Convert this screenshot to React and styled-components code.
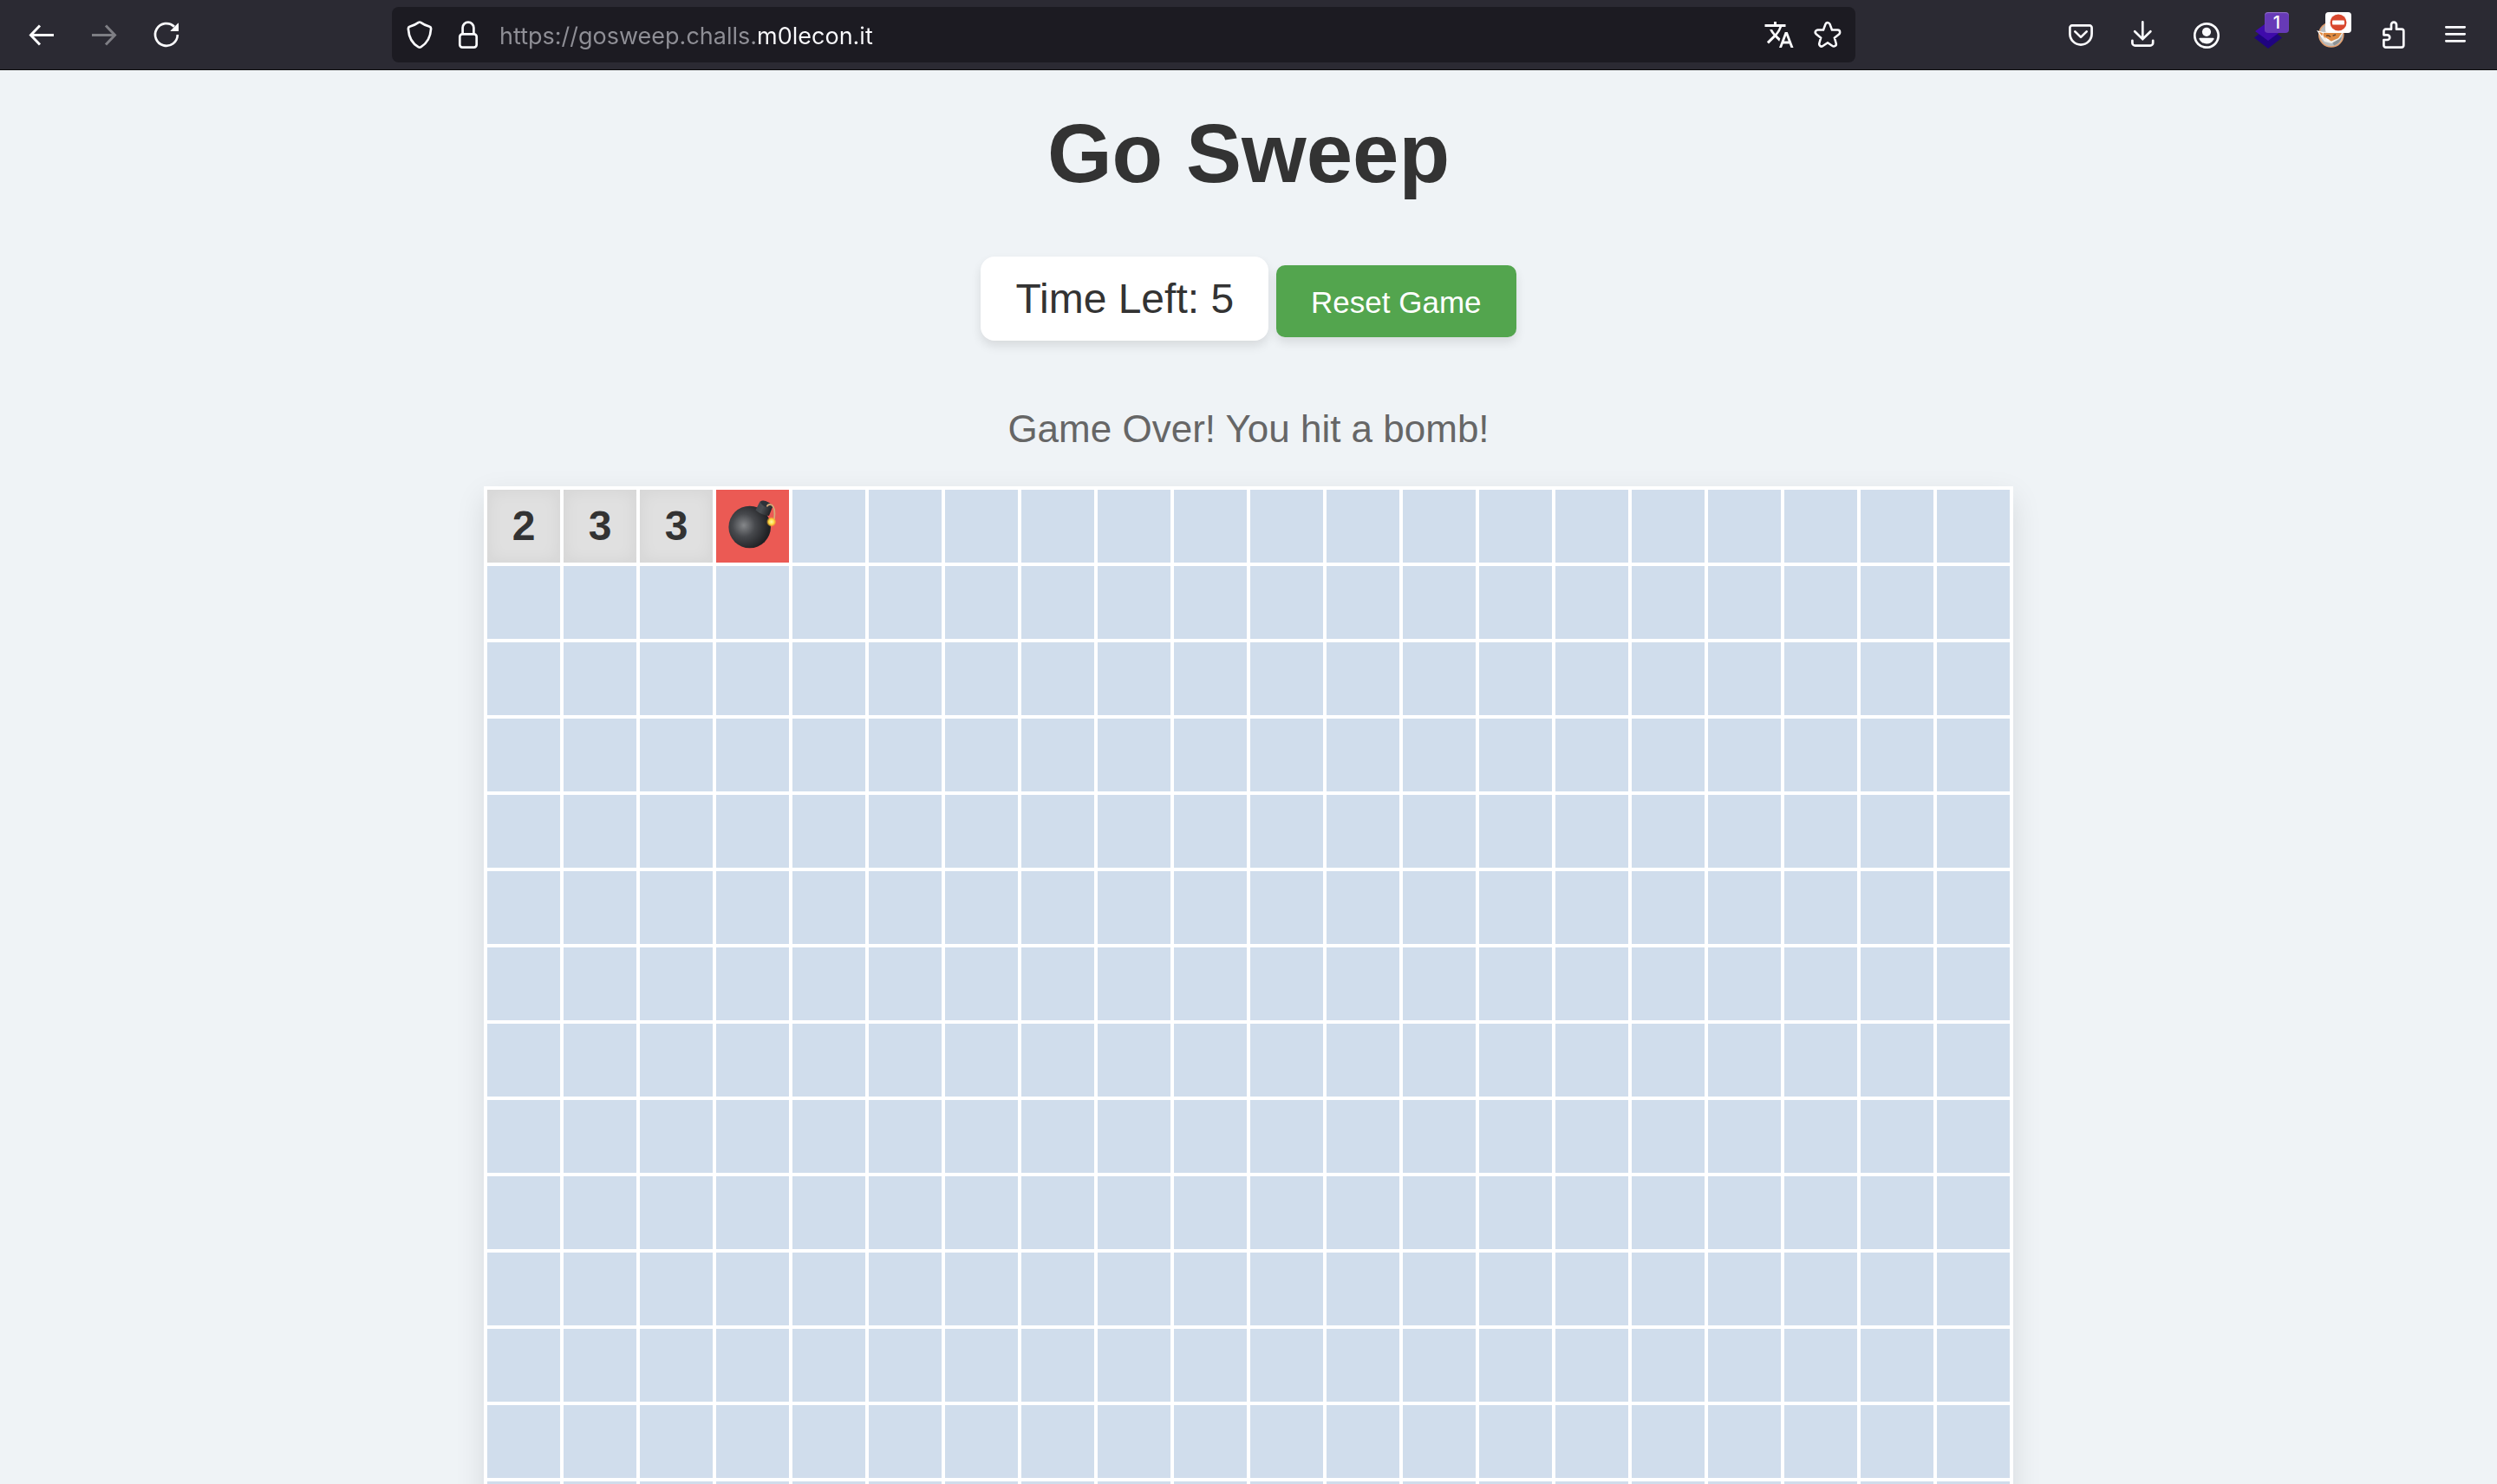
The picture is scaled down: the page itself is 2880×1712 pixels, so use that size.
import React, { useState } from "react";
import styled, { createGlobalStyle, css } from "styled-components";
import { MdTranslate } from "react-icons/md";

const GlobalStyle = createGlobalStyle`
  *, *::before, *::after { box-sizing: border-box; }
  body {
    margin: 0;
    background: #eff3f6;
    color: #333;
    font-family: Arial, "Liberation Sans", sans-serif;
  }
  button, input { font: inherit; color: inherit; }
`;

const Window = styled.div`
  display: flex;
  flex-direction: column;
  height: 100vh;
`;

const Toolbar = styled.header`
  display: flex;
  align-items: center;
  flex: none;
  padding: 0 12px;
  background: #2b2a33;
  border-bottom: 1px solid #0c0c0d;
  color: #fbfbfe;
`;

const ToolGroup = styled.nav`
  display: flex;
`;

const ToolButton = styled.button`
  position: relative;
  display: flex;
  align-items: center;
  justify-content: center;
  width: 72px;
  height: 80px;
  padding: 0;
  border: 0;
  background: none;
  opacity: ${(p) => (p.disabled ? 0.4 : 1)};
`;

const Badge = styled.span`
  position: absolute;
  top: 14px;
  left: ${(p) => (p.$light ? 30 : 32)}px;
  display: flex;
  align-items: center;
  justify-content: center;
  width: ${(p) => (p.$light ? 30 : 28)}px;
  height: 24px;
  border-radius: 4px;
  background: ${(p) => (p.$light ? "#fff" : "#673ab7")};
  box-shadow: inset 0 1px 1px rgba(255, 255, 255, 0.3);
  color: #fff;
  font: 500 20px/24px Inter, "Liberation Sans", sans-serif;
`;

const AddressBar = styled.div`
  display: flex;
  align-items: center;
  flex: 1;
  height: 64px;
  margin: 0 224px;
  padding: 0 4px;
  border-radius: 8px;
  background: #1c1b22;
`;

const BarButton = styled.button`
  display: flex;
  align-items: center;
  justify-content: center;
  flex: none;
  width: 56px;
  height: 64px;
  padding: 0;
  border: 0;
  background: none;
`;

const AddressInput = styled.input`
  flex: 1;
  min-width: 0;
  height: 42px;
  margin-left: 8px;
  padding: 2px 0 0;
  border: 0;
  outline: 0;
  font: 400 27px/40px Inter, "Liberation Sans", sans-serif;
  color: transparent;
  background: linear-gradient(90deg, #8f8f96 297px, #fbfbfe 297px);
  background-clip: text;
  -webkit-background-clip: text;
`;

const Svg = styled.svg`
  display: block;
  width: 32px;
  height: 32px;
  fill: none;
  stroke: ${(p) => (p.$painted ? "none" : "currentColor")};
  stroke-width: 2.7;
`;

const Page = styled.main`
  display: flex;
  flex-direction: column;
  align-items: center;
  flex: 1;
  min-height: 0;
  overflow: auto;
  scrollbar-width: none;
  padding: 40px 40px 0;
`;

const Title = styled.h1`
  margin: 0 0 64px;
  font-size: 96px;
  line-height: 111px;
  font-weight: 700;
`;

const Controls = styled.div`
  display: flex;
  align-items: baseline;
  gap: 9px;
  margin-bottom: 76px;
`;

const Timer = styled.div`
  padding: 20px 40px;
  border-radius: 16px;
  background: #fff;
  box-shadow: 0 6px 12px rgba(0, 0, 0, 0.1);
  font-size: 48px;
  line-height: 57px;
`;

const ResetButton = styled.button`
  padding: 22px 40px 20px;
  border: 0;
  border-radius: 10px;
  background: #53a54e;
  box-shadow: 0 6px 12px rgba(0, 0, 0, 0.1);
  color: #fff;
  font-size: 35px;
  line-height: 41px;
  cursor: pointer;
`;

const Message = styled.p`
  margin: 0 0 41px;
  color: #666;
  font-size: 44px;
  line-height: 51px;
`;

const Board = styled.div`
  display: grid;
  grid-template-columns: repeat(20, 84px);
  grid-auto-rows: 84px;
  gap: 4px;
  padding: 4px;
  margin-bottom: 40px;
  background: #fff;
  box-shadow: 0 12px 32px rgba(0, 0, 0, 0.1);
`;

const Cell = styled.button`
  display: flex;
  align-items: center;
  justify-content: center;
  padding: 0;
  border: 0;
  border-radius: 0;
  background: #d0ddec;
  font-size: 48px;
  line-height: 56px;
  font-weight: 700;
  cursor: pointer;
  ${(p) =>
    p.$state === "open" &&
    css`
      background: #e0e0e0;
      box-shadow: inset 0 0 20px rgba(0, 0, 0, 0.06);
    `}
  ${(p) => p.$state === "bomb" && css`background: #eb5a54;`}
`;

const BombSvg = styled.svg`
  display: block;
  width: 56px;
  height: 56px;
  margin-bottom: 4px;
`;

const Icon = ({ children, ...rest }) => (
  <Svg viewBox="0 0 32 32" aria-hidden="true" {...rest}>{children}</Svg>
);

const BackIcon = () => (
  <Icon><path d="M30 16.5H3.5M14 5.5 3.5 16.5 14 27.5" strokeWidth="3" /></Icon>
);
const ForwardIcon = () => (
  <Icon><path d="M2 16.5H28.5M18 5.5 28.5 16.5 18 27.5" strokeWidth="3" /></Icon>
);
const ReloadIcon = () => (
  <Icon>
    <path d="M28.8 16A12.9 12.9 0 1 1 25 6.8" />
    <path d="M29.3 2.8Q30 2.3 30 3.2V12H21.2Q20 12 20.8 11.2Z" fill="currentColor" stroke="none" />
  </Icon>
);
const ShieldIcon = () => (
  <Icon>
    <path d="M14.8 1.9Q16 1.1 17.2 1.9C20.5 4.3 24 5.8 27.6 6.8Q29.2 7.4 29.1 9.3C28.5 18.5 24.5 26 17.6 30.1Q16 31 14.4 30.1C7.5 26 3.5 18.5 2.9 9.3Q2.8 7.4 4.4 6.8C8 5.8 11.5 4.3 14.8 1.9Z" />
  </Icon>
);
const LockIcon = () => (
  <Icon>
    <rect x="6.3" y="15.3" width="19.4" height="15.3" rx="3" />
    <path d="M9.6 15V8a6.4 6.4 0 0 1 12.8 0V15" />
  </Icon>
);
const starPoints =
  "16,5 18.94,12.95 27.41,13.29 20.76,18.55 23.05,26.71 16,22 8.95,26.71 11.24,18.55 4.59,13.29 13.06,12.95";
const StarIcon = () => (
  <Icon strokeLinejoin="round">
    <polygon points={starPoints} strokeWidth="8" />
    <polygon points={starPoints} fill="#1c1b22" stroke="#1c1b22" strokeWidth="3" />
  </Icon>
);
const PocketIcon = () => (
  <Icon strokeLinejoin="round" strokeLinecap="round">
    <path d="M3.4 7.9a2.5 2.5 0 0 1 2.5-2.5H26.1a2.5 2.5 0 0 1 2.5 2.5V15a12.6 12.6 0 0 1-25.2 0Z" />
    <path d="M9.3 12.4 16 18.9 22.7 12.4" />
  </Icon>
);
const DownloadIcon = () => (
  <Icon strokeLinecap="round">
    <path d="M15.3 1.4V20.6M6.2 12.2 15.3 21.2 24.4 12.2" />
    <path d="M3.4 22.8V25.4a3.2 3.2 0 0 0 3.2 3.2H24a3.2 3.2 0 0 0 3.2-3.2V22.8" />
  </Icon>
);
const AccountIcon = () => (
  <Icon>
    <circle cx="17" cy="17" r="13.7" />
    <g fill="currentColor" stroke="none">
      <circle cx="17" cy="12.8" r="5.1" />
      <path d="M9.3 19.8H24.7Q26 20 25.4 21.2C23.6 24.8 20.8 26.4 17 26.4S10.4 24.8 8.6 21.2Q8 20 9.3 19.8Z" />
    </g>
  </Icon>
);
const LayersIcon = () => (
  <Icon $painted>
    <path d="M0 19.5 16 7 32 19.5 16 32Z" fill="#1f0480" />
    <path d="M1 12 16 1 31 12 16 23Z" fill="#3f0bab" />
  </Icon>
);
const FoxIcon = () => (
  <Icon $painted>
    <circle cx="16.8" cy="16" r="14.8" fill="#e3a071" />
    <circle cx="16.8" cy="16" r="13.2" fill="#b9bcbd" />
    <path d="M18 24 29 19Q27 26 20 28.6Z" fill="#8d9294" />
    <path d="M1 12 9 13 24 9 31 13 26 21 17 26 9 24 5.5 19.5Z" fill="#f3efe9" />
    <path d="M6 14 12 14 22 11 29 14 25 20 17 23.4 9 19.5Z" fill="#df8a41" />
    <path d="M0 11 8 13.4 6.5 19.5Z" fill="#fff" />
    <path d="M2.5 12.8 7 14.2 6.2 17.5Z" fill="#df8a41" />
    <path d="M9 18.4 15.5 22.6 12 22.4Z" fill="#fff" />
    <path d="M11 17.4Q14 16.2 16 18.6M18.6 17.4 22 15.8" stroke="#59412f" strokeWidth="1.4" />
  </Icon>
);
const NoEntry = styled.svg`
  display: block;
  width: 20px;
  height: 20px;
`;
const PuzzleIcon = () => (
  <Icon strokeLinejoin="round">
    <path d="M5.4 16.3V12a2.3 2.3 0 0 1 2.3-2.3H14V4.6a3 3 0 0 1 6 0V9.7H26a2.3 2.3 0 0 1 2.3 2.3V28.3a2.3 2.3 0 0 1-2.3 2.3H7.7a2.3 2.3 0 0 1-2.3-2.3V22H9.4a2.85 2.85 0 0 0 0-5.7Z" />
  </Icon>
);
const MenuIcon = () => (
  <Icon strokeLinecap="round"><path d="M5.3 7.3H26.7M5.3 15.3H26.7M5.3 23.3H26.7" /></Icon>
);

const Bomb = () => (
  <BombSvg viewBox="0 0 56 56" aria-hidden="true">
    <defs>
      <radialGradient id="shell" cx="0.36" cy="0.46" r="0.6">
        <stop offset="0" stopColor="#85878a" />
        <stop offset="0.45" stopColor="#47494d" />
        <stop offset="1" stopColor="#202124" />
      </radialGradient>
      <linearGradient id="neck" x1="0" y1="0" x2="1" y2="0.4">
        <stop offset="0" stopColor="#3d434b" />
        <stop offset="0.5" stopColor="#4b4f53" />
        <stop offset="1" stopColor="#222326" />
      </linearGradient>
      <radialGradient id="spark">
        <stop offset="0" stopColor="#fff8a8" />
        <stop offset="0.6" stopColor="#fcd83c" />
        <stop offset="1" stopColor="#f59a2c" stopOpacity="0.4" />
      </radialGradient>
    </defs>
    <circle cx="24.7" cy="31" r="24.3" fill="url(#shell)" />
    <path d="M36.5 1.5Q44-1 51.5 6.5L47 18Q39 18 31.5 11.5Z" fill="url(#neck)" />
    <ellipse cx="44.2" cy="5" rx="7.6" ry="3.2" transform="rotate(27 44.2 5)" fill="#2d3239" />
    <path d="M44.5 7.5Q46 4 50 5.5C54 8 54 14 53 22" fill="none" stroke="#d6a878" strokeWidth="1.8" />
    <circle cx="49.8" cy="25" r="5.4" fill="url(#spark)" />
  </BombSvg>
);

const COLUMNS = 20;
const ROWS = 20;
const ADDRESS = "https://gosweep.challs.m0lecon.it";
const REVEALED = ["2", "3", "3", "bomb"];

const cells = Array.from({ length: COLUMNS * ROWS }, (_, index) => REVEALED[index] ?? null);

function cellState(value) {
  if (value === "bomb") return "bomb";
  return value ? "open" : "hidden";
}

export default function App() {
  const [address, setAddress] = useState(ADDRESS);

  return (
    <Window>
      <GlobalStyle />
      <Toolbar>
        <ToolGroup aria-label="Navigation">
          <ToolButton aria-label="Back"><BackIcon /></ToolButton>
          <ToolButton aria-label="Forward" disabled><ForwardIcon /></ToolButton>
          <ToolButton aria-label="Reload"><ReloadIcon /></ToolButton>
        </ToolGroup>
        <AddressBar>
          <BarButton aria-label="Tracking protection"><ShieldIcon /></BarButton>
          <BarButton aria-label="Site security"><LockIcon /></BarButton>
          <AddressInput
            aria-label="Address"
            spellCheck={false}
            value={address}
            onChange={(event) => setAddress(event.target.value)}
          />
          <BarButton aria-label="Translate page"><MdTranslate size={36} /></BarButton>
          <BarButton aria-label="Bookmark page"><StarIcon /></BarButton>
        </AddressBar>
        <ToolGroup aria-label="Tools">
          <ToolButton aria-label="Save to Pocket"><PocketIcon /></ToolButton>
          <ToolButton aria-label="Downloads"><DownloadIcon /></ToolButton>
          <ToolButton aria-label="Account"><AccountIcon /></ToolButton>
          <ToolButton aria-label="Layers extension">
            <LayersIcon />
            <Badge>1</Badge>
          </ToolButton>
          <ToolButton aria-label="Fox extension">
            <FoxIcon />
            <Badge $light>
              <NoEntry viewBox="0 0 20 20" aria-hidden="true">
                <circle cx="10" cy="10" r="9.5" fill="#d9482f" />
                <rect x="3" y="7.5" width="14" height="5" rx="1" fill="#fff" />
              </NoEntry>
            </Badge>
          </ToolButton>
          <ToolButton aria-label="Extensions"><PuzzleIcon /></ToolButton>
          <ToolButton aria-label="Menu"><MenuIcon /></ToolButton>
        </ToolGroup>
      </Toolbar>
      <Page>
        <Title>Go Sweep</Title>
        <Controls>
          <Timer>Time Left: 5</Timer>
          <ResetButton>Reset Game</ResetButton>
        </Controls>
        <Message role="status">Game Over! You hit a bomb!</Message>
        <Board>
          {cells.map((value, index) => (
            <Cell
              key={index}
              $state={cellState(value)}
              aria-label={`Row ${Math.floor(index / COLUMNS) + 1}, column ${(index % COLUMNS) + 1}`}
            >
              {value === "bomb" ? <Bomb /> : value}
            </Cell>
          ))}
        </Board>
      </Page>
    </Window>
  );
}
